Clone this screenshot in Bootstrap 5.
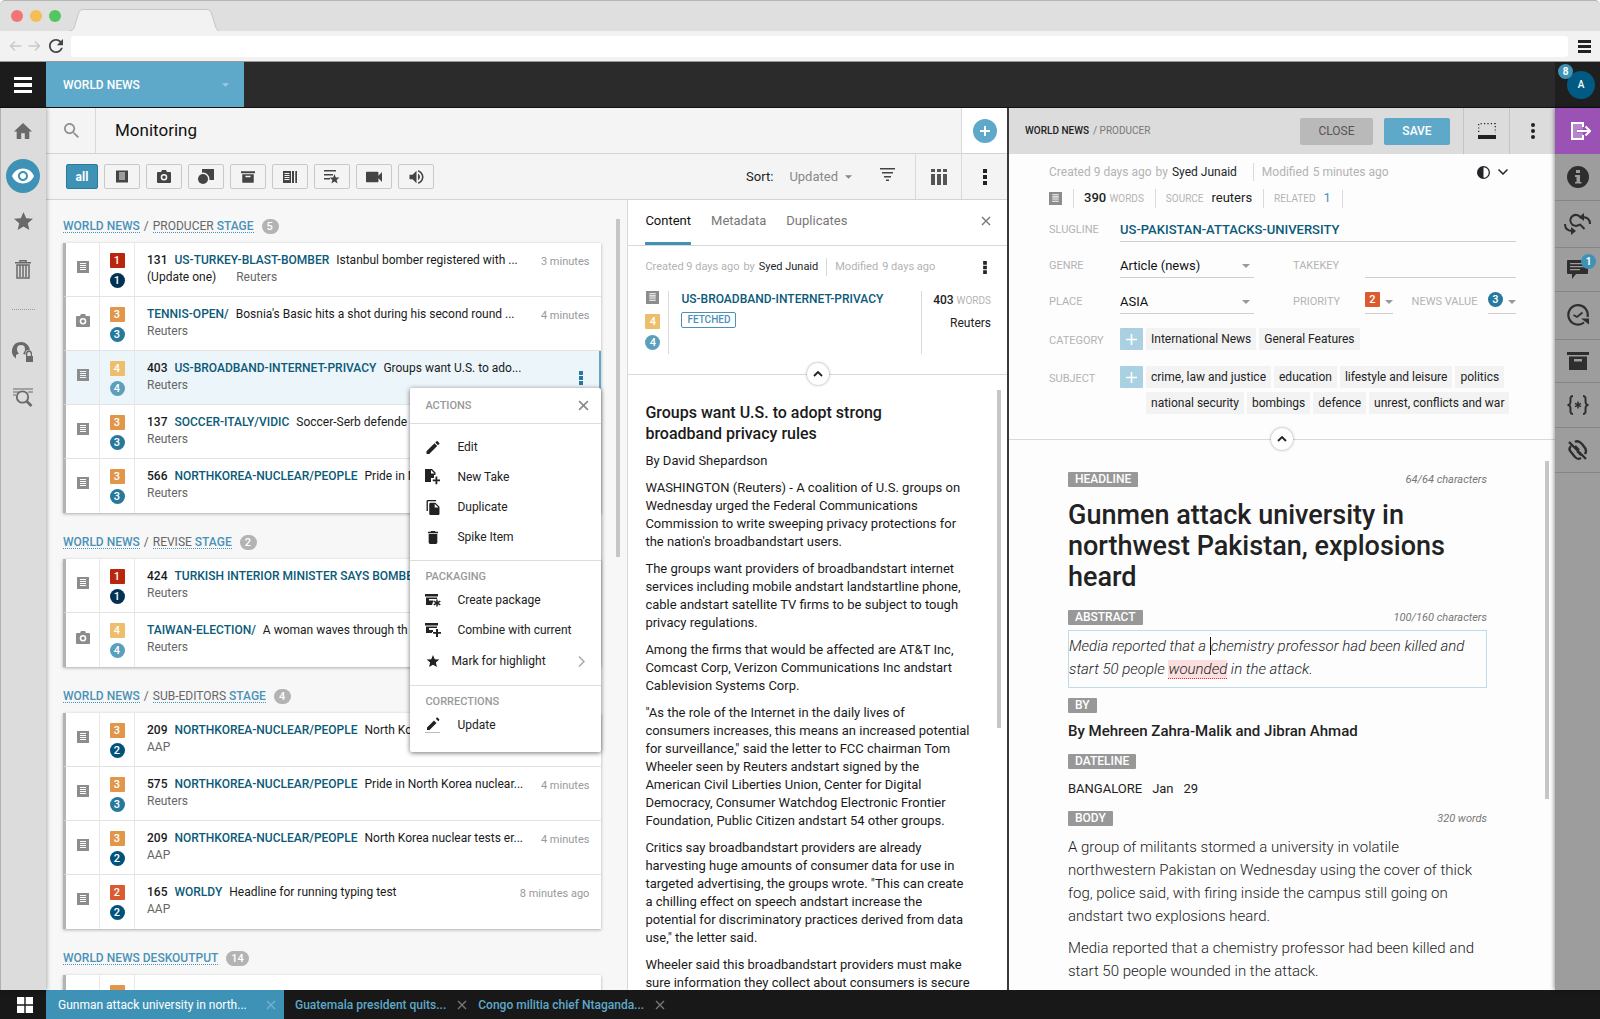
<!DOCTYPE html>
<html lang="en">
<head>
<meta charset="utf-8">
<meta name="viewport" content="width=device-width, initial-scale=1">
<title>Monitoring</title>
<link href="https://cdn.jsdelivr.net/npm/bootstrap@5.3.0/dist/css/bootstrap.min.css" rel="stylesheet">
<style>
:root{--sky:#5ea9c9;--ocean:#3e92b6;--deep:#005777;--ink:#2b2b2b;--line:#d9d9d9}
body{font-family:Roboto,"Liberation Sans",sans-serif;font-size:13px;line-height:18px;color:#222;background:#fdfdfd;height:100vh;overflow:hidden}
a{text-decoration:none;color:inherit}
button{background:none;border:0;padding:0;color:inherit}
input,select{background:transparent;border:0;padding:0;outline:0;min-width:0;color:#111}
select{appearance:none}
svg{fill:currentColor;flex:none;display:block}
.medium{font-weight:500}
.w-rail{width:46px;flex:none}
.center{display:flex;align-items:center;justify-content:center}
.min0{min-height:0;min-width:0}

/* browser frame */
.frame-tabs{height:31px;background:#dfdfdf;border-top:1px solid #b5b5b5;padding-left:11px;border-radius:5px 5px 0 0}
.light{width:12px;height:12px;border-radius:50%}
.frame-bar{height:31px;background:#f2f2f2;border-bottom:1px solid #999;padding:0 9px;gap:6px;color:#c9c9c9}
.address{height:21px;background:#fff;border-radius:3px}

/* top bar */
.topbar{height:46px;background:var(--ink);border-bottom:1px solid #111}
.burger{background:#1c1c1c;color:#fff}
.desk{width:198px;background:var(--sky);color:#fff;padding:0 15px 0 17px;font-size:12px;font-weight:500}
.user{background:#1f1f1f;width:45px}
.avatar{width:28px;height:28px;border-radius:50%;background:#005a84;color:#fff;font-size:10px;font-weight:500;margin-left:7px}
.pip{width:15px;height:15px;border-radius:50%;background:var(--ocean);color:#fff;font-size:10px;font-weight:700;line-height:15px;text-align:center;position:absolute}

/* left side */
.side{background:#dcdcdc;color:#696969;box-shadow:1px 0 4px rgba(0,0,0,.3),inset 1px 0 #b0b0b0;z-index:2}
.side a,.side .nav-gap{height:45px}
.side .on{width:34px;height:34px;border-radius:50%;background:var(--ocean);color:#fff}
.dots-rule{width:23px;border-top:1px dotted #999}

/* monitoring */
.monitor{flex:961 1 0;border-right:2px solid #3a3a3a}
.tool{height:46px;background:#f4f4f4;border-bottom:1px solid #d3d3d3}
.tool-cell{border-left:1px solid var(--line)}
.find{width:49px;color:#909090;padding-left:2px}
.view-title{font-size:17px;font-weight:400;color:#111;padding-left:19px;border-left:1px solid var(--line)}
.filters{padding-left:20px;gap:6px}
.filters button{width:36px;height:25px;border:1px solid #c9c9c9;border-radius:2px;color:#444}
.filters .on{width:32px;background:var(--ocean);color:#fff;border-color:#2a7a9c;font-weight:700;font-size:12px}
.plus{width:24px;height:24px;border-radius:50%;background:var(--sky);color:#fff}
.list-pane{width:60.5%;flex:none;background:#f7f7f7;padding:0 26px 0 17px}
.stage{padding-top:21px}
.stage h2{font-size:12px;line-height:16px;font-weight:500;color:#4a92b8;margin:0 0 9px;height:16px;gap:4px;align-items:center}
.stage h2 a{border-bottom:1px dotted #4a92b8;line-height:12px;margin-top:1px}
.stage h2 i{font-style:normal;font-weight:400;color:#666}
.count{height:15px;min-width:17px;padding:0 5px;border-radius:8px;background:#b3b3b3;color:#fff;font-size:11px;line-height:15px;margin-left:4px}
.first{padding-top:18px}
.stories{box-shadow:0 1px 3px rgba(0,0,0,.3);background:#fff}
.story{height:54px;border-left:3px solid #b3b3b3;border-bottom:1px solid #e3e3e3}
.story:last-child{border-bottom:0}
.story .kind{width:33px;flex:none;color:#8c8c8c;padding-bottom:6px}
.story .rank{width:36px;flex:none;border:solid #e8e8e8;border-width:0 1px;padding-top:10px;gap:5px}
.story .words{padding:9px 0 0 12px;font-size:12px;line-height:17px;color:#1a1a1a}
.story .when{padding:10px 12px 0 8px;font-size:11px;line-height:17px;color:#999;flex:none}
.story.on{background:#ecf5fa;border-right:2px solid var(--sky)}
.slug{color:#0a5a78;font-weight:500}
.src{color:#666}
.gap-b{gap:7px}
.sq,.ci{width:15px;height:15px;color:#fff;font-size:11px;font-weight:500;line-height:15px;text-align:center;border-radius:1px;flex:none}
.ci{border-radius:50%}
.p1{background:#b8260d}.p2{background:#d95b2f}.p3{background:#e2964a}.p4{background:#edbf6c}
.u1{background:#003353}.u2{background:#00537a}.u3{background:#26799c}.u4{background:#5c9fbd}
.thumb{position:absolute;width:4px;background:#c6c6c6;height:338px}

/* actions menu */
.actions{position:absolute;top:37px;right:-2px;width:191px;height:364px;background:#fff;box-shadow:0 1px 5px rgba(0,0,0,.55);border-radius:2px;z-index:5;color:#222;font-size:12px}
.actions h3{font-size:11px;line-height:16px;font-weight:500;color:#999;margin:0}
.actions .head{height:35px;padding:0 12px 0 15px;color:#888}
.actions section{border-top:1px solid #ddd;padding-left:15px}
.actions section button{height:30px;width:100%;text-align:left;gap:16px}
.actions section .sub{height:32px;gap:10px}
.actions svg{width:16px}

/* preview */
.preview{flex:1 1 0;border-left:1px solid var(--line);background:#fff}
.tabs{height:46px;padding:0 16px 0 17px;border-bottom:1px solid var(--line);gap:20px;font-size:13px;color:#777}
.tabs button{height:45px;border-bottom:3px solid transparent;padding-bottom:1px}
.tabs .on{border-color:var(--ocean);color:#111}
.soft{color:#b3b3b3}
.meta{font-size:12px}
.meta-s{font-size:11px;margin-bottom:15px}
.prev-head{padding:12px 16px 0 17px;height:129px;border-bottom:1px solid var(--line);font-size:12px}
.vr-line{border-left:1px solid var(--line)}
.tag{border:1px solid #4a92b8;color:#4a92b8;font-size:10px;font-weight:500;line-height:14px;padding:0 5px;border-radius:2px}
.fold{position:absolute;width:22px;height:22px;border-radius:50%;background:#fff;box-shadow:0 0 3px rgba(0,0,0,.4);bottom:-11px;left:50%;margin-left:-11px}
.article{padding:27px 37px 0 17px;color:#1a1a1a}
.article h1{font-size:16px;line-height:21px;font-weight:500;margin:0 0 8px;max-width:270px}
.article p{margin:0 0 9px}

/* editor */
.editor{flex:546 1 0;background:#fdfdfd}
.ed-bar{height:46px;background:#dcdcdc;padding-left:16px;font-size:10px}
.ed-bar .do{height:27px;border-radius:2px;font-size:12px}
.ed-bar .cell{width:46px;border-left:1px solid #c4c4c4}
.fields{padding:9px 39px 25px 40px;border-bottom:1px solid var(--line)}
.fields label,.cap{color:#b3b3b3;font-size:11px}
.facts{gap:11px;margin-top:6px}
.facts>span{padding-left:10px}
.facts .cap{font-size:10px}
.fl{width:71px;flex:none}
.fl-2{width:111px;padding-left:39px;flex:none}
.under{border-bottom:1px solid #cfcfcf;height:24px}
.frow{height:36px;align-items:center}
.pick{flex:134 1 0}
.pick::after{content:"";border:4px solid transparent;border-top-color:#999;border-bottom:0;margin-left:-12px;pointer-events:none}
.half{flex:151 1 0}
.chips{gap:4px 3px}
.chip{background:#f3f3f3;font-size:12px;line-height:22px;padding:0 5px}
.add{width:23px;height:22px;background:#a9d1e2;color:#fff;border-radius:1px;margin-right:3px;flex:none}
.copy{padding:32px 68px 0 59px}
.pill-tag{background:#989898;color:#fff;font-size:12px;font-weight:500;line-height:15px;padding:0 7px;border-radius:1px}
.tally{font-size:11px;line-height:15px;font-style:italic;color:#777}
.copy h1{font-size:27px;line-height:31px;font-weight:500;margin:13px 0 17px;color:#222}
.light-text{font-size:15px;line-height:23px;font-weight:300;color:#222}
.abstract{border:1px solid #bfdde9;padding:4px 0 6px;margin:5px 0 10px;font-style:italic}
.typo{background:#fbdfe0;border-bottom:1px dotted #d33}
.caret{border-left:1px solid #111}

/* right side */
.tools{width:45px;background:#9d9d9d;color:#2e2e2e;box-shadow:-1px 0 4px rgba(0,0,0,.4);z-index:2}
.tools .exit{height:46px;background:#9a52b4;color:#fff;padding-left:6px}
.tool-set{height:319px}
.tool-set a{border-bottom:1px solid #858585}

/* bottom bar */
.dock{height:29px;background:#181818;color:var(--sky);font-size:12px;font-weight:500}
.dock .open{width:238px;background:var(--ocean);color:#fff;font-weight:400;padding:0 8px 0 12px}
.dock .cross{color:#777}
.dock .item{gap:11px;padding-left:11px}
</style>
</head>
<body class="d-flex flex-column">
<svg class="d-none">
 <symbol id="doc" viewBox="0 0 12 12"><path fill-rule="evenodd" d="M0 0h12v12H0zM3 2v1h6V2zm0 2v1h6V4zm0 2v1h6V6zm0 2v1h6V8z"/></symbol>
 <symbol id="cam" viewBox="0 0 14 13"><path fill-rule="evenodd" d="M1 2h3l1-2h4l1 2h3a1 1 0 0 1 1 1v9a1 1 0 0 1-1 1H1a1 1 0 0 1-1-1V3a1 1 0 0 1 1-1zm6 2a3.300 3.300 0 1 0 0 6.600A3.300 3.300 0 0 0 7 4zm0 1.500a1.800 1.800 0 1 1 0 3.600 1.800 1.800 0 0 1 0-3.600z"/></symbol>
 <symbol id="x" viewBox="0 0 10 10"><path fill="none" stroke="currentColor" stroke-width="1.400" d="M1 1l8 8M9 1L1 9"/></symbol>
 <symbol id="kebab" viewBox="0 0 4 14"><path d="M0 0h4v4H0zM0 5h4v4H0zM0 10h4v4H0z"/></symbol>
 <symbol id="down" viewBox="0 0 8 4"><path d="M0 0h8L4 4z"/></symbol>
 <symbol id="box" viewBox="0 0 22 18"><path fill-rule="evenodd" d="M0 0h22v3H0zM2 4.500h18V18H2zM7 7v2.500h8V7z"/></symbol>
 <symbol id="up" viewBox="0 0 10 6"><path fill="none" stroke="currentColor" stroke-width="1.800" d="M1 5l4-4 4 4"/></symbol>
 <symbol id="star" viewBox="2 2 20 19"><path d="M12 17.270L18.180 21l-1.640-7.030L22 9.240l-7.190-.61L12 2 9.190 8.630 2 9.240l5.460 4.730L5.820 21z"/></symbol>
 <symbol id="pencil" viewBox="3 3 18 18"><path d="M3 17.250V21h3.750L17.810 9.940l-3.750-3.750zM20.710 7.040c.39-.39.39-1.020 0-1.410l-2.340-2.340c-.39-.39-1.020-.39-1.410 0l-1.830 1.830 3.750 3.750z"/></symbol>
</svg>

<header class="flex-shrink-0">
 <div class="frame-tabs d-flex align-items-center position-relative">
  <div class="d-flex" style="gap:7px"><span class="light" style="background:#f07573"></span><span class="light" style="background:#f3bf54"></span><span class="light" style="background:#54c661"></span></div>
  <svg class="align-self-end ms-2" width="150" height="22" viewBox="0 0 150 22"><path fill="#f2f2f2" stroke="#c6c6c6" d="M0 22q4 0 5-3L10 3q1-2.500 4-2.500h124q3 0 4 2.500l5 16q1 3 4 3"/></svg>
 </div>
 <div class="frame-bar d-flex align-items-center">
  <svg width="13" height="10" viewBox="0 0 12 10"><path fill="none" stroke="currentColor" stroke-width="1.400" d="M12 5H1M5.500.5L1 5l4.500 4.500"/></svg>
  <svg width="13" height="10" viewBox="0 0 12 10"><path fill="none" stroke="currentColor" stroke-width="1.400" d="M0 5h11M6.500.5L11 5 6.500 9.500"/></svg>
  <svg width="18" height="14" viewBox="2 4 20 16" style="color:#444"><path d="M17.650 6.350C16.200 4.900 14.210 4 12 4c-4.420 0-7.990 3.580-7.990 8s3.570 8 7.990 8c3.730 0 6.840-2.550 7.730-6h-2.080c-.82 2.330-3.040 4-5.650 4-3.310 0-6-2.690-6-6s2.690-6 6-6c1.660 0 3.140.69 4.220 1.780L13 11h7V4z"/></svg>
  <input class="address flex-grow-1" type="text" aria-label="Address">
  <svg class="ms-1" width="13" height="13" viewBox="0 0 13 13" style="color:#222"><path d="M0 0h13v3H0zM0 5h13v3H0zM0 10h13v3H0z"/></svg>
 </div>
</header>

<nav class="topbar d-flex flex-shrink-0">
 <button class="burger w-rail center" aria-label="Menu"><svg width="18" height="16" viewBox="0 0 18 16"><path d="M0 0h18v3H0zM0 6h18v4H0zM0 13h18v3H0z"/></svg></button>
 <button class="desk d-flex align-items-center justify-content-between"><span>WORLD NEWS</span><svg width="7" height="4" style="opacity:.4"><use href="#down"/></svg></button>
 <div class="user center ms-auto position-relative"><span class="avatar center">A</span><span class="pip" style="left:3px;top:2px">8</span></div>
</nav>

<div class="d-flex flex-grow-1 min0">
 <nav class="side w-rail d-flex flex-column align-items-center">
  <a class="center" href="#" aria-label="Home"><svg width="18" height="16" viewBox="2 3 20 17" preserveAspectRatio="none"><path d="M10 20v-6h4v6h5v-8h3L12 3 2 12h3v8z"/></svg></a>
  <a class="center" href="#" aria-label="Monitoring"><span class="on center"><svg width="22" height="16" viewBox="1 4.500 22 15"><path d="M12 4.500C7 4.500 2.730 7.610 1 12c1.730 4.390 6 7.500 11 7.500s9.270-3.110 11-7.500c-1.730-4.390-6-7.500-11-7.500zM12 17c-2.760 0-5-2.240-5-5s2.240-5 5-5 5 2.240 5 5-2.240 5-5 5zm0-8c-1.660 0-3 1.340-3 3s1.340 3 3 3 3-1.340 3-3-1.340-3-3-3z"/></svg></span></a>
  <a class="center" href="#" aria-label="Starred"><svg width="19" height="18"><use href="#star"/></svg></a>
  <a class="center mt-1" href="#" aria-label="Spiked"><svg width="16" height="19" viewBox="0 0 16 19"><path fill="none" stroke="currentColor" stroke-width="1.500" d="M0 2.700h16M5 2V.8h6V2M2 5v13h12V5zM5 5v12M8 5v12M11 5v12"/></svg></a>
  <div class="nav-gap center" style="height:34px"><span class="dots-rule"></span></div>
  <a class="center mt-1" href="#" aria-label="Personal"><svg width="22" height="21" viewBox="0 0 22 21"><path fill-rule="evenodd" d="M9 0a9 9 0 0 1 9 8.500h-1.500V8a3 3 0 0 0-3 3v1.500h-1l-1.500-1C12.500 10 13 8.500 13 7a4 4 0 0 0-8 0c0 1.500.5 3 2 4.500L4 13v3.500A9 9 0 0 1 9 0z"/><path fill-rule="evenodd" d="M14 14v-2.500a3 3 0 0 1 6 0V14h1v6h-7v-6zm1.300 0h3.400v-2.300a1.700 1.700 0 0 0-3.400 0z"/></svg></a>
  <a class="center" href="#" aria-label="Saved searches"><svg width="20" height="19" viewBox="0 0 20 19"><path fill="none" stroke="currentColor" stroke-width="1" d="M0 1h20M0 4h6M15 4h5M0 7h3"/><circle cx="9.500" cy="9" r="5.700" fill="none" stroke="currentColor" stroke-width="1.800"/><path stroke="currentColor" stroke-width="2.600" d="M13.500 13l5 5"/></svg></a>
 </nav>

 <main class="monitor d-flex flex-column min0">
  <div class="tool d-flex flex-shrink-0">
   <button class="find center" aria-label="Search"><svg width="15" height="15" viewBox="3 3 17.500 17.500"><path d="M15.500 14h-.79l-.28-.27C15.410 12.590 16 11.110 16 9.500 16 5.910 13.090 3 9.500 3S3 5.910 3 9.500 5.910 16 9.500 16c1.610 0 3.090-.59 4.230-1.570l.27.28v.79l5 4.990L20.490 19zm-6 0C7.010 14 5 11.990 5 9.500S7.010 5 9.500 5 14 7.010 14 9.500 11.990 14 9.500 14z"/></svg></button>
   <h1 class="view-title d-flex align-items-center mb-0">Monitoring</h1>
   <div class="tool-cell w-rail center ms-auto bg-white"><button class="plus center" aria-label="Add"><svg width="10" height="10" viewBox="0 0 10 10"><path d="M4 0h2v4h4v2H6v4H4V6H0V4h4z"/></svg></button></div>
  </div>
  <div class="tool d-flex flex-shrink-0">
   <div class="filters d-flex align-items-center">
    <button class="on">all</button>
    <button class="center" aria-label="Text"><svg width="12" height="13"><use href="#doc"/></svg></button>
    <button class="center" aria-label="Picture"><svg width="14" height="13"><use href="#cam"/></svg></button>
    <button class="center" aria-label="Graphic"><svg width="16" height="15" viewBox="0 0 16 15"><circle cx="5" cy="10" r="5"/><path d="M4 0h12v11h-4.500A6.500 6.500 0 0 0 4 3.700z"/></svg></button>
    <button class="center" aria-label="Package"><svg width="14" height="12"><use href="#box"/></svg></button>
    <button class="center" aria-label="Composite"><svg width="14" height="12" viewBox="0 0 14 12"><path fill-rule="evenodd" d="M0 0h8v12H0zM1.500 2v1h5V2zm0 2v1h5V4zm0 2v1h5V6zm0 2v1h5V8zM9 0h2v12H9zM12.300 0H14v12h-1.700z"/></svg></button>
    <button class="center" aria-label="Highlights"><svg width="16" height="14" viewBox="0 0 16 14"><path d="M0 0h12v1.500H0zM0 4h9v1.500H0zM0 8h6v1.500H0zM10.500 4l1.300 3.500 3.700.1-2.900 2.300 1 3.600-3.100-2-3.100 2 1-3.600-2.900-2.300 3.700-.1z"/></svg></button>
    <button class="center" aria-label="Video"><svg width="16" height="12" viewBox="3 6 18 12"><path d="M17 10.500V7c0-.55-.45-1-1-1H4c-.55 0-1 .45-1 1v10c0 .55.45 1 1 1h12c.55 0 1-.45 1-1v-3.500l4 4v-11z"/></svg></button>
    <button class="center" aria-label="Audio"><svg width="15" height="14" viewBox="3 3 18 18"><path d="M3 9v6h4l5 5V4L7 9zm13.500 3c0-1.770-1.020-3.290-2.500-4.030v8.050c1.480-.73 2.500-2.250 2.500-4.020zM14 3.230v2.060c2.890.86 5 3.540 5 6.710s-2.110 5.850-5 6.710v2.060c4.010-.91 7-4.490 7-8.770s-2.990-7.860-7-8.770z"/></svg></button>
   </div>
   <div class="d-flex align-items-center ms-auto">
    <span class="me-3">Sort:</span>
    <button class="d-flex align-items-center" style="color:#888;gap:7px">Updated <svg width="7" height="4"><use href="#down"/></svg></button>
    <button class="ms-4 me-3 pb-1" aria-label="Order" style="color:#444"><svg class="ms-1 me-1" width="15" height="13" viewBox="0 0 15 13"><path d="M0 0h15v1.500H0zM2 4h11v1.500H2zM4 8h7v1.500H4zM6 11.500h3V13H6z"/></svg></button>
   </div>
   <button class="tool-cell w-rail center" aria-label="Columns" style="color:#555"><svg width="16" height="16" viewBox="0 0 16 16"><path d="M0 0h4v3H0zM6 0h4v3H6zM12 0h4v3h-4zM0 5h4v11H0zM6 5h4v11H6zM12 5h4v11h-4z"/></svg></button>
   <button class="tool-cell w-rail center" aria-label="More"><svg width="4" height="16" viewBox="0 0 4 16"><path d="M0 0h4v4H0zM0 6h4v4H0zM0 12h4v4H0z"/></svg></button>
  </div>

  <div class="d-flex flex-grow-1 min0">
   <section class="list-pane position-relative overflow-hidden min0">
    <span class="thumb" style="right:7px;top:19px"></span>
    <div class="stage first">
     <h2 class="d-flex"><a href="#">WORLD NEWS</a><i>/</i><a href="#"><i>PRODUCER</i> STAGE</a><span class="count">5</span></h2>
     <div class="stories">
      <div class="story d-flex">
       <span class="kind center"><svg width="12" height="12"><use href="#doc"/></svg></span>
       <span class="rank d-flex flex-column align-items-center"><span class="sq p1">1</span><span class="ci u1">1</span></span>
       <div class="words flex-grow-1 min0"><div class="d-flex gap-b text-nowrap"><b class="medium">131</b><a class="slug" href="#">US-TURKEY-BLAST-BOMBER</a><span>Istanbul bomber registered with ...</span></div><div class="d-flex"><span class="me-3">(Update one)</span><span class="src ms-1">Reuters</span></div></div>
       <span class="when text-nowrap">3 minutes</span>
      </div>
      <div class="story d-flex">
       <span class="kind center"><svg width="14" height="13"><use href="#cam"/></svg></span>
       <span class="rank d-flex flex-column align-items-center"><span class="sq p3">3</span><span class="ci u3">3</span></span>
       <div class="words flex-grow-1 min0"><div class="d-flex gap-b text-nowrap"><a class="slug" href="#">TENNIS-OPEN/</a><span>Bosnia's Basic hits a shot during his second round ...</span></div><div class="src">Reuters</div></div>
       <span class="when text-nowrap">4 minutes</span>
      </div>
      <div class="story on d-flex position-relative">
       <span class="kind center"><svg width="12" height="12"><use href="#doc"/></svg></span>
       <span class="rank d-flex flex-column align-items-center"><span class="sq p4">4</span><span class="ci u4">4</span></span>
       <div class="words flex-grow-1 min0"><div class="d-flex gap-b text-nowrap"><b class="medium">403</b><a class="slug" href="#">US-BROADBAND-INTERNET-PRIVACY</a><span>Groups want U.S. to ado...</span></div><div class="src">Reuters</div></div>
       <button class="align-self-center me-3" aria-label="Item actions" style="color:#26799c"><svg width="4" height="14"><use href="#kebab"/></svg></button>
       <div class="actions">
        <div class="head d-flex align-items-center justify-content-between"><h3>ACTIONS</h3><button aria-label="Close menu"><svg style="width:11px" width="11" height="11"><use href="#x"/></svg></button></div>
        <section style="padding-top:8px;padding-bottom:8px">
         <button class="d-flex align-items-center"><svg height="13"><use href="#pencil"/></svg>Edit</button>
         <button class="d-flex align-items-center"><svg height="16" viewBox="0 0 16 16"><path fill-rule="evenodd" d="M0 0h7l3.500 3.500V6H9v3H6v4H0zM6 1v3.500h3.500z"/><path d="M10.500 7.500h1.800v3H15v1.800h-2.700v3h-1.800v-3H7.700v-1.800h2.800z"/></svg>New Take</button>
         <button class="d-flex align-items-center"><svg height="15" viewBox="1 1 21 22"><path d="M16 1H4c-1.100 0-2 .9-2 2v14h2V3h12zm-1 4l6 6v10c0 1.100-.9 2-2 2H7.990C6.890 23 6 22.100 6 21l.01-14c0-1.100.89-2 1.990-2zm-1 7h5.500L14 6.500z"/></svg>Duplicate</button>
         <button class="d-flex align-items-center"><svg height="13" viewBox="5 3 14 18"><path d="M6 19c0 1.100.9 2 2 2h8c1.100 0 2-.9 2-2V7H6zM19 4h-3.500l-1-1h-5l-1 1H5v2h14z"/></svg>Spike Item</button>
        </section>
        <section style="padding-top:8px;padding-bottom:8px">
         <h3>PACKAGING</h3>
         <button class="d-flex align-items-center"><svg height="13" viewBox="0 0 16 13"><path d="M0 0h13v2.500H0zM1 3.500h11V5H4v1.500h4.500L7 11H1z"/><path fill="none" stroke="currentColor" stroke-width="1.500" d="M12 5.500v7M8.700 7.200l6.600 3.600M15.300 7.200l-6.600 3.600"/></svg>Create package</button>
         <button class="d-flex align-items-center"><svg height="14" viewBox="0 0 16 14"><path d="M0 0h13v2.500H0zM1 3.500h11V5H4v2h4v2H7v1H1z"/><path d="M11 6h2v3h3v1.800h-3V14h-2v-3.200H8V9h3z"/></svg>Combine with current</button>
         <button class="sub d-flex align-items-center"><svg height="12"><use href="#star"/></svg>Mark for highlight<svg class="ms-auto me-3" style="width:7px;color:#aaa" height="11" viewBox="0 0 7 11"><path fill="none" stroke="currentColor" stroke-width="1.500" d="M1 .5l5 5-5 5"/></svg></button>
        </section>
        <section style="padding-top:8px">
         <h3>CORRECTIONS</h3>
         <button class="d-flex align-items-center"><svg height="16" viewBox="0 0 16 16"><path d="M2 10.500V13h2.500l7-7L9 3.500zM13.300 4.200l.9-.9c.3-.3.3-.8 0-1.100l-1.400-1.400c-.3-.3-.8-.3-1.100 0l-.9.900z"/><path opacity=".3" d="M0 15h15v1H0z"/></svg>Update</button>
        </section>
       </div>
      </div>
      <div class="story d-flex">
       <span class="kind center"><svg width="12" height="12"><use href="#doc"/></svg></span>
       <span class="rank d-flex flex-column align-items-center"><span class="sq p3">3</span><span class="ci u3">3</span></span>
       <div class="words flex-grow-1 min0"><div class="d-flex gap-b text-nowrap"><b class="medium">137</b><a class="slug" href="#">SOCCER-ITALY/VIDIC</a><span>Soccer-Serb defende</span></div><div class="src">Reuters</div></div>
      </div>
      <div class="story d-flex">
       <span class="kind center"><svg width="12" height="12"><use href="#doc"/></svg></span>
       <span class="rank d-flex flex-column align-items-center"><span class="sq p3">3</span><span class="ci u3">3</span></span>
       <div class="words flex-grow-1 min0"><div class="d-flex gap-b text-nowrap"><b class="medium">566</b><a class="slug" href="#">NORTHKOREA-NUCLEAR/PEOPLE</a><span>Pride in N</span></div><div class="src">Reuters</div></div>
      </div>
     </div>
    </div>

    <div class="stage">
     <h2 class="d-flex"><a href="#">WORLD NEWS</a><i>/</i><a href="#"><i>REVISE</i> STAGE</a><span class="count">2</span></h2>
     <div class="stories">
      <div class="story d-flex">
       <span class="kind center"><svg width="12" height="12"><use href="#doc"/></svg></span>
       <span class="rank d-flex flex-column align-items-center"><span class="sq p1">1</span><span class="ci u1">1</span></span>
       <div class="words flex-grow-1 min0"><div class="d-flex gap-b text-nowrap"><b class="medium">424</b><a class="slug" href="#">TURKISH INTERIOR MINISTER SAYS BOMBER</a></div><div class="src">Reuters</div></div>
      </div>
      <div class="story d-flex">
       <span class="kind center"><svg width="14" height="13"><use href="#cam"/></svg></span>
       <span class="rank d-flex flex-column align-items-center"><span class="sq p4">4</span><span class="ci u4">4</span></span>
       <div class="words flex-grow-1 min0"><div class="d-flex gap-b text-nowrap"><a class="slug" href="#">TAIWAN-ELECTION/</a><span>A woman waves through th</span></div><div class="src">Reuters</div></div>
      </div>
     </div>
    </div>

    <div class="stage">
     <h2 class="d-flex"><a href="#">WORLD NEWS</a><i>/</i><a href="#"><i>SUB-EDITORS</i> STAGE</a><span class="count">4</span></h2>
     <div class="stories">
      <div class="story d-flex">
       <span class="kind center"><svg width="12" height="12"><use href="#doc"/></svg></span>
       <span class="rank d-flex flex-column align-items-center"><span class="sq p3">3</span><span class="ci u2">2</span></span>
       <div class="words flex-grow-1 min0"><div class="d-flex gap-b text-nowrap"><b class="medium">209</b><a class="slug" href="#">NORTHKOREA-NUCLEAR/PEOPLE</a><span>North Kor</span></div><div class="src">AAP</div></div>
      </div>
      <div class="story d-flex">
       <span class="kind center"><svg width="12" height="12"><use href="#doc"/></svg></span>
       <span class="rank d-flex flex-column align-items-center"><span class="sq p3">3</span><span class="ci u3">3</span></span>
       <div class="words flex-grow-1 min0"><div class="d-flex gap-b text-nowrap"><b class="medium">575</b><a class="slug" href="#">NORTHKOREA-NUCLEAR/PEOPLE</a><span>Pride in North Korea nuclear...</span></div><div class="src">Reuters</div></div>
       <span class="when text-nowrap">4 minutes</span>
      </div>
      <div class="story d-flex">
       <span class="kind center"><svg width="12" height="12"><use href="#doc"/></svg></span>
       <span class="rank d-flex flex-column align-items-center"><span class="sq p3">3</span><span class="ci u2">2</span></span>
       <div class="words flex-grow-1 min0"><div class="d-flex gap-b text-nowrap"><b class="medium">209</b><a class="slug" href="#">NORTHKOREA-NUCLEAR/PEOPLE</a><span>North Korea nuclear tests er...</span></div><div class="src">AAP</div></div>
       <span class="when text-nowrap">4 minutes</span>
      </div>
      <div class="story d-flex">
       <span class="kind center"><svg width="12" height="12"><use href="#doc"/></svg></span>
       <span class="rank d-flex flex-column align-items-center"><span class="sq p2">2</span><span class="ci u2">2</span></span>
       <div class="words flex-grow-1 min0"><div class="d-flex gap-b text-nowrap"><b class="medium">165</b><a class="slug" href="#">WORLDY</a><span>Headline for running typing test</span></div><div class="src">AAP</div></div>
       <span class="when text-nowrap">8 minutes ago</span>
      </div>
     </div>
    </div>

    <div class="stage">
     <h2 class="d-flex"><a href="#">WORLD NEWS DESKOUTPUT</a><span class="count">14</span></h2>
     <div class="stories">
      <div class="story d-flex">
       <span class="kind"></span>
       <span class="rank d-flex flex-column align-items-center"><span class="sq p3"></span></span>
      </div>
     </div>
    </div>
   </section>

   <section class="preview d-flex flex-column min0 overflow-hidden">
    <div class="tabs d-flex flex-shrink-0">
     <button class="on">Content</button><button>Metadata</button><button>Duplicates</button>
     <button class="ms-auto" aria-label="Close preview"><svg width="10" height="10"><use href="#x"/></svg></button>
    </div>
    <div class="prev-head position-relative flex-shrink-0">
     <div class="meta-s d-flex align-items-center soft text-nowrap">
      <span>Created 9 days ago</span><span class="ms-1">by</span><span class="ms-1 text-dark">Syed Junaid</span>
      <span class="vr-line ms-2 ps-2">Modified</span><span class="ms-1">9 days ago</span>
      <button class="ms-auto me-1 text-dark" aria-label="More"><svg width="4" height="13"><use href="#kebab"/></svg></button>
     </div>
     <div class="d-flex" style="height:63px">
      <div class="d-flex flex-column pe-2" style="gap:6px;color:#8c8c8c"><svg width="15" height="13"><use href="#doc"/></svg><span class="sq p4 mt-1">4</span><span class="ci u4">4</span></div>
      <div class="vr-line ps-2 d-flex flex-column align-items-start flex-grow-1"><a class="slug ms-1 mb-1" style="line-height:17px" href="#">US-BROADBAND-INTERNET-PRIVACY</a><span class="tag ms-1">FETCHED</span></div>
      <div class="vr-line text-end text-nowrap" style="width:70px"><div><b class="medium">403</b> <span class="soft" style="font-size:10px">WORDS</span></div><div class="mt-1">Reuters</div></div>
     </div>
     <button class="fold center" aria-label="Collapse"><svg width="10" height="6"><use href="#up"/></svg></button>
    </div>
    <div class="position-relative overflow-hidden flex-grow-1">
     <span class="thumb" style="right:6px;top:15px"></span>
     <article class="article">
      <h1>Groups want U.S. to adopt strong broadband privacy rules</h1>
      <p>By David Shepardson</p>
      <p>WASHINGTON (Reuters) - A coalition of U.S. groups on Wednesday urged the Federal Communications Commission to write sweeping privacy protections for the nation's broadbandstart users.</p>
      <p>The groups want providers of broadbandstart internet services including mobile andstart landstartline phone, cable andstart satellite TV firms to be subject to tough privacy regulations.</p>
      <p>Among the firms that would be affected are AT&amp;T Inc, Comcast Corp, Verizon Communications Inc andstart Cablevision Systems Corp.</p>
      <p>"As the role of the Internet in the daily lives of consumers increases, this means an increased potential for surveillance," said the letter to FCC chairman Tom Wheeler seen by Reuters andstart signed by the American Civil Liberties Union, Center for Digital Democracy, Consumer Watchdog Electronic Frontier Foundation, Public Citizen andstart 54 other groups.</p>
      <p>Critics say broadbandstart providers are already harvesting huge amounts of consumer data for use in targeted advertising, the groups wrote. "This can create a chilling effect on speech andstart increase the potential for discriminatory practices derived from data use," the letter said.</p>
      <p>Wheeler said this broadbandstart providers must make sure information they collect about consumers is secure</p>
     </article>
    </div>
   </section>
  </div>
 </main>

 <section class="editor d-flex flex-column min0 overflow-hidden">
  <div class="ed-bar d-flex align-items-center flex-shrink-0">
   <span class="medium">WORLD NEWS</span><span class="ms-1" style="color:#777">/ PRODUCER</span>
   <button class="do ms-auto" style="width:73px;background:#b9b9b9;color:#555">CLOSE</button>
   <button class="do medium text-white" style="width:66px;background:var(--sky);margin:0 13px 0 11px">SAVE</button>
   <button class="cell center align-self-stretch" aria-label="Minimize"><svg width="18" height="16" viewBox="0 0 18 16"><path d="M0 12h18v4H0z"/><path fill="none" stroke="currentColor" stroke-width="1.200" stroke-dasharray="1.200 2.200" d="M.7 9V.7h16.600V10"/></svg></button>
   <button class="cell center align-self-stretch" aria-label="More"><svg width="4" height="16" viewBox="0 0 4 16"><circle cx="2" cy="2" r="2"/><circle cx="2" cy="8" r="2"/><circle cx="2" cy="14" r="2"/></svg></button>
  </div>
  <div class="fields position-relative flex-shrink-0">
   <div class="meta d-flex align-items-center soft text-nowrap mb-2">
    <span>Created 9 days ago</span><span class="ms-1">by</span><span class="ms-1 text-dark">Syed Junaid</span>
    <span class="vr-line ms-3 ps-2">Modified</span><span class="ms-1">5 minutes ago</span>
    <svg class="ms-auto text-dark" width="13" height="13" viewBox="0 0 13 13"><path fill-rule="evenodd" d="M6.500 0a6.500 6.500 0 1 1 0 13 6.500 6.500 0 0 1 0-13zm0 1.300v10.400a5.200 5.200 0 0 0 0-10.400z"/></svg>
    <svg class="text-dark ms-2 me-2" width="10" height="6" viewBox="0 0 10 6"><path fill="none" stroke="currentColor" stroke-width="1.500" d="M.5.5L5 5 9.500.5"/></svg>
   </div>
   <div class="facts d-flex align-items-center text-nowrap">
    <svg width="13" height="13" style="color:#8c8c8c"><use href="#doc"/></svg>
    <span class="vr-line"><b class="medium">390</b> <span class="cap">WORDS</span></span>
    <span class="vr-line"><span class="cap me-2">SOURCE</span>reuters</span>
    <span class="vr-line"><span class="cap me-2">RELATED</span><a href="#" style="color:#4a92b8">1</a></span>
    <span class="vr-line">&nbsp;</span>
   </div>
   <div class="frow d-flex mt-1"><label class="fl" for="slugline">SLUGLINE</label><input id="slugline" class="under slug flex-grow-1" value="US-PAKISTAN-ATTACKS-UNIVERSITY"></div>
   <div class="frow d-flex">
    <label class="fl" for="genre">GENRE</label><span class="under pick d-flex align-items-center"><select id="genre" class="w-100"><option>Article (news)</option></select></span>
    <label for="takekey" class="fl-2">TAKEKEY</label><input id="takekey" class="under half">
   </div>
   <div class="frow d-flex">
    <label class="fl" for="place">PLACE</label><span class="under pick d-flex align-items-center"><select id="place" class="w-100"><option>ASIA</option></select></span>
    <span class="fl-2 cap">PRIORITY</span>
    <div class="half d-flex align-items-center justify-content-between">
     <button class="under d-flex align-items-center" style="gap:5px" aria-label="Priority"><span class="sq p2 mb-1">2</span><svg width="8" height="4" style="color:#999"><use href="#down"/></svg></button>
     <span class="cap text-nowrap ms-2">NEWS VALUE</span>
     <button class="under d-flex align-items-center" style="gap:5px" aria-label="News value"><span class="ci u3 mb-1">3</span><svg width="8" height="4" style="color:#999"><use href="#down"/></svg></button>
    </div>
   </div>
   <div class="d-flex mt-2 mb-3"><span class="fl cap pt-1">CATEGORY</span>
    <button class="add center" aria-label="Add category"><svg width="11" height="11" viewBox="0 0 11 11"><path d="M4.700 0h1.600v4.700H11v1.600H6.300V11H4.700V6.300H0V4.700h4.700z"/></svg></button>
    <div class="chips d-flex flex-wrap"><span class="chip">International News</span><span class="chip">General Features</span></div></div>
   <div class="d-flex"><span class="fl cap pt-1">SUBJECT</span>
    <button class="add center" aria-label="Add subject"><svg width="11" height="11" viewBox="0 0 11 11"><path d="M4.700 0h1.600v4.700H11v1.600H6.300V11H4.700V6.300H0V4.700h4.700z"/></svg></button>
    <div class="chips d-flex flex-wrap"><span class="chip">crime, law and justice</span><span class="chip">education</span><span class="chip">lifestyle and leisure</span><span class="chip">politics</span><span class="chip">national security</span><span class="chip">bombings</span><span class="chip">defence</span><span class="chip">unrest, conflicts and war</span></div></div>
   <button class="fold center" aria-label="Collapse"><svg width="10" height="6"><use href="#up"/></svg></button>
  </div>
  <div class="position-relative overflow-hidden flex-grow-1">
   <span class="thumb" style="right:6px;top:21px"></span>
   <div class="copy">
    <div class="d-flex justify-content-between"><span class="pill-tag">HEADLINE</span><span class="tally">64/64 characters</span></div>
    <h1>Gunmen attack university in northwest Pakistan, explosions heard</h1>
    <div class="d-flex justify-content-between"><span class="pill-tag">ABSTRACT</span><span class="tally">100/160 characters</span></div>
    <div class="abstract light-text">Media reported that a <span class="caret"></span>chemistry professor had been killed and start 50 people <span class="typo">wounded</span> in the attack.</div>
    <div class="d-flex"><span class="pill-tag">BY</span></div>
    <div class="medium" style="font-size:15px;margin:9px 0 14px">By Mehreen Zahra-Malik and Jibran Ahmad</div>
    <div class="d-flex"><span class="pill-tag">DATELINE</span></div>
    <div class="d-flex" style="font-size:13px;gap:10px;margin:11px 0 13px"><span>BANGALORE</span><span>Jan</span><span>29</span></div>
    <div class="d-flex justify-content-between"><span class="pill-tag">BODY</span><span class="tally">320 words</span></div>
    <p class="light-text" style="margin:10px 0 9px">A group of militants stormed a university in volatile northwestern Pakistan on Wednesday using the cover of thick fog, police said, with firing inside the campus still going on andstart two explosions heard.</p>
    <p class="light-text">Media reported that a chemistry professor had been killed and start 50 people wounded in the attack.</p>
   </div>
  </div>
 </section>

 <aside class="tools d-flex flex-column flex-shrink-0">
  <a class="exit center" href="#" aria-label="Send to"><svg width="20" height="18" viewBox="0 0 20 18"><path fill="#fff" fill-opacity=".3" stroke="#fff" stroke-width="2" d="M12 5V1H1v16h11v-4"/><path d="M6 7.500h8V4l6 5-6 5v-3.500H6z" fill="#9a52b4"/><path fill="none" stroke="#fff" stroke-width="2" d="M6 9h12M14.500 4.500L19 9l-4.500 4.500"/></svg></a>
  <div class="tool-set d-flex flex-column">
   <a class="center flex-fill" href="#" aria-label="Info"><svg width="22" height="22" viewBox="0 0 22 22"><path fill-rule="evenodd" d="M11 0a11 11 0 1 1 0 22 11 11 0 0 1 0-22zM9 4v3h4V4zM8 9v2h1.500v5H8v1.500h6.500V16H13V9z"/></svg></a>
   <a class="center flex-fill" href="#" aria-label="Versions"><svg width="27" height="22" viewBox="0 0 27 22"><g fill="none" stroke="currentColor" stroke-width="2"><path d="M15.500 11.500A5.500 5.500 0 1 1 17 5.500M15.500 11l5 5"/><path d="M1 11c0 5 3 7 8 7M26 11c0-5-3-7-8-7"/></g><path d="M7 14l5 4-5 4zM20 0l-5 4 5 4z"/></svg></a>
   <a class="center flex-fill position-relative" href="#" aria-label="Comments"><svg width="21" height="19" viewBox="0 0 21 19"><path fill-rule="evenodd" d="M1 0h19a1 1 0 0 1 1 1v12a1 1 0 0 1-1 1H9l-4 5v-5H1a1 1 0 0 1-1-1V1a1 1 0 0 1 1-1zm2 3v1.200h12V3zm0 3v1.200h15V6zm0 3v1.200h10V9z"/></svg><span class="pip" style="right:4px;top:6px">1</span></a>
   <a class="center flex-fill" href="#" aria-label="History"><svg width="22" height="22" viewBox="0 0 22 22"><path fill="none" stroke="currentColor" stroke-width="2.200" d="M20.500 13A9.700 9.700 0 1 0 17 18.500"/><path fill="none" stroke="currentColor" stroke-width="1.800" d="M6.500 11l3.500 2 5.500-4.500"/><path d="M14 14.500h8v6z"/></svg></a>
   <a class="center flex-fill" href="#" aria-label="Packages"><svg width="22" height="18"><use href="#box"/></svg></a>
   <a class="center flex-fill" href="#" aria-label="Macros"><svg width="22" height="20" viewBox="0 0 22 20"><g fill="none" stroke="currentColor" stroke-width="2"><path d="M6 1C3 1 3.500 3 3.500 6S3 10 .5 10c2.500 0 3 1 3 4s-.5 5 2.500 5M16 1c3 0 2.500 2 2.500 5s.5 4 3 4c-2.500 0-3 1-3 4s.5 5-2.500 5"/><path stroke-width="1.500" d="M11 6.500v7M8 8.300l6 3.400M14 8.300l-6 3.400"/></g></svg></a>
   <a class="center flex-fill" href="#" aria-label="Unlink"><svg width="20" height="20" viewBox="0 0 20 20"><path fill="none" stroke="currentColor" stroke-width="2.400" d="M1 2l17 17M7 2c3-2 5 0 7 2l3 4c2 3 1 4 0 6M3 6c-2 2-2 4 0 6l4 5c3 3 4 2 6 1M7 6l4 4M9 11l4 4"/></svg></a>
  </div>
 </aside>
</div>

<footer class="dock d-flex align-items-center flex-shrink-0">
 <button class="w-rail center ps-1 text-white" aria-label="Workspace"><svg width="16" height="16" viewBox="0 0 16 16"><path d="M0 0h7.300v7.300H0zM8.700 0H16v7.300H8.700zM0 8.700h7.300V16H0zM8.700 8.700H16V16H8.700z"/></svg></button>
 <div class="open d-flex align-items-center justify-content-between align-self-stretch"><a href="#">Gunman attack university in north...</a><button aria-label="Close tab" style="color:#74b2cf"><svg width="10" height="10"><use href="#x"/></svg></button></div>
 <div class="item d-flex align-items-center"><a href="#">Guatemala president quits...</a><button class="cross" aria-label="Close tab"><svg width="10" height="10"><use href="#x"/></svg></button></div>
 <div class="item d-flex align-items-center"><a href="#">Congo militia chief Ntaganda...</a><button class="cross" aria-label="Close tab"><svg width="10" height="10"><use href="#x"/></svg></button></div>
</footer>
<script src="https://cdn.jsdelivr.net/npm/bootstrap@5.3.0/dist/js/bootstrap.bundle.min.js"></script>
</body>
</html>
